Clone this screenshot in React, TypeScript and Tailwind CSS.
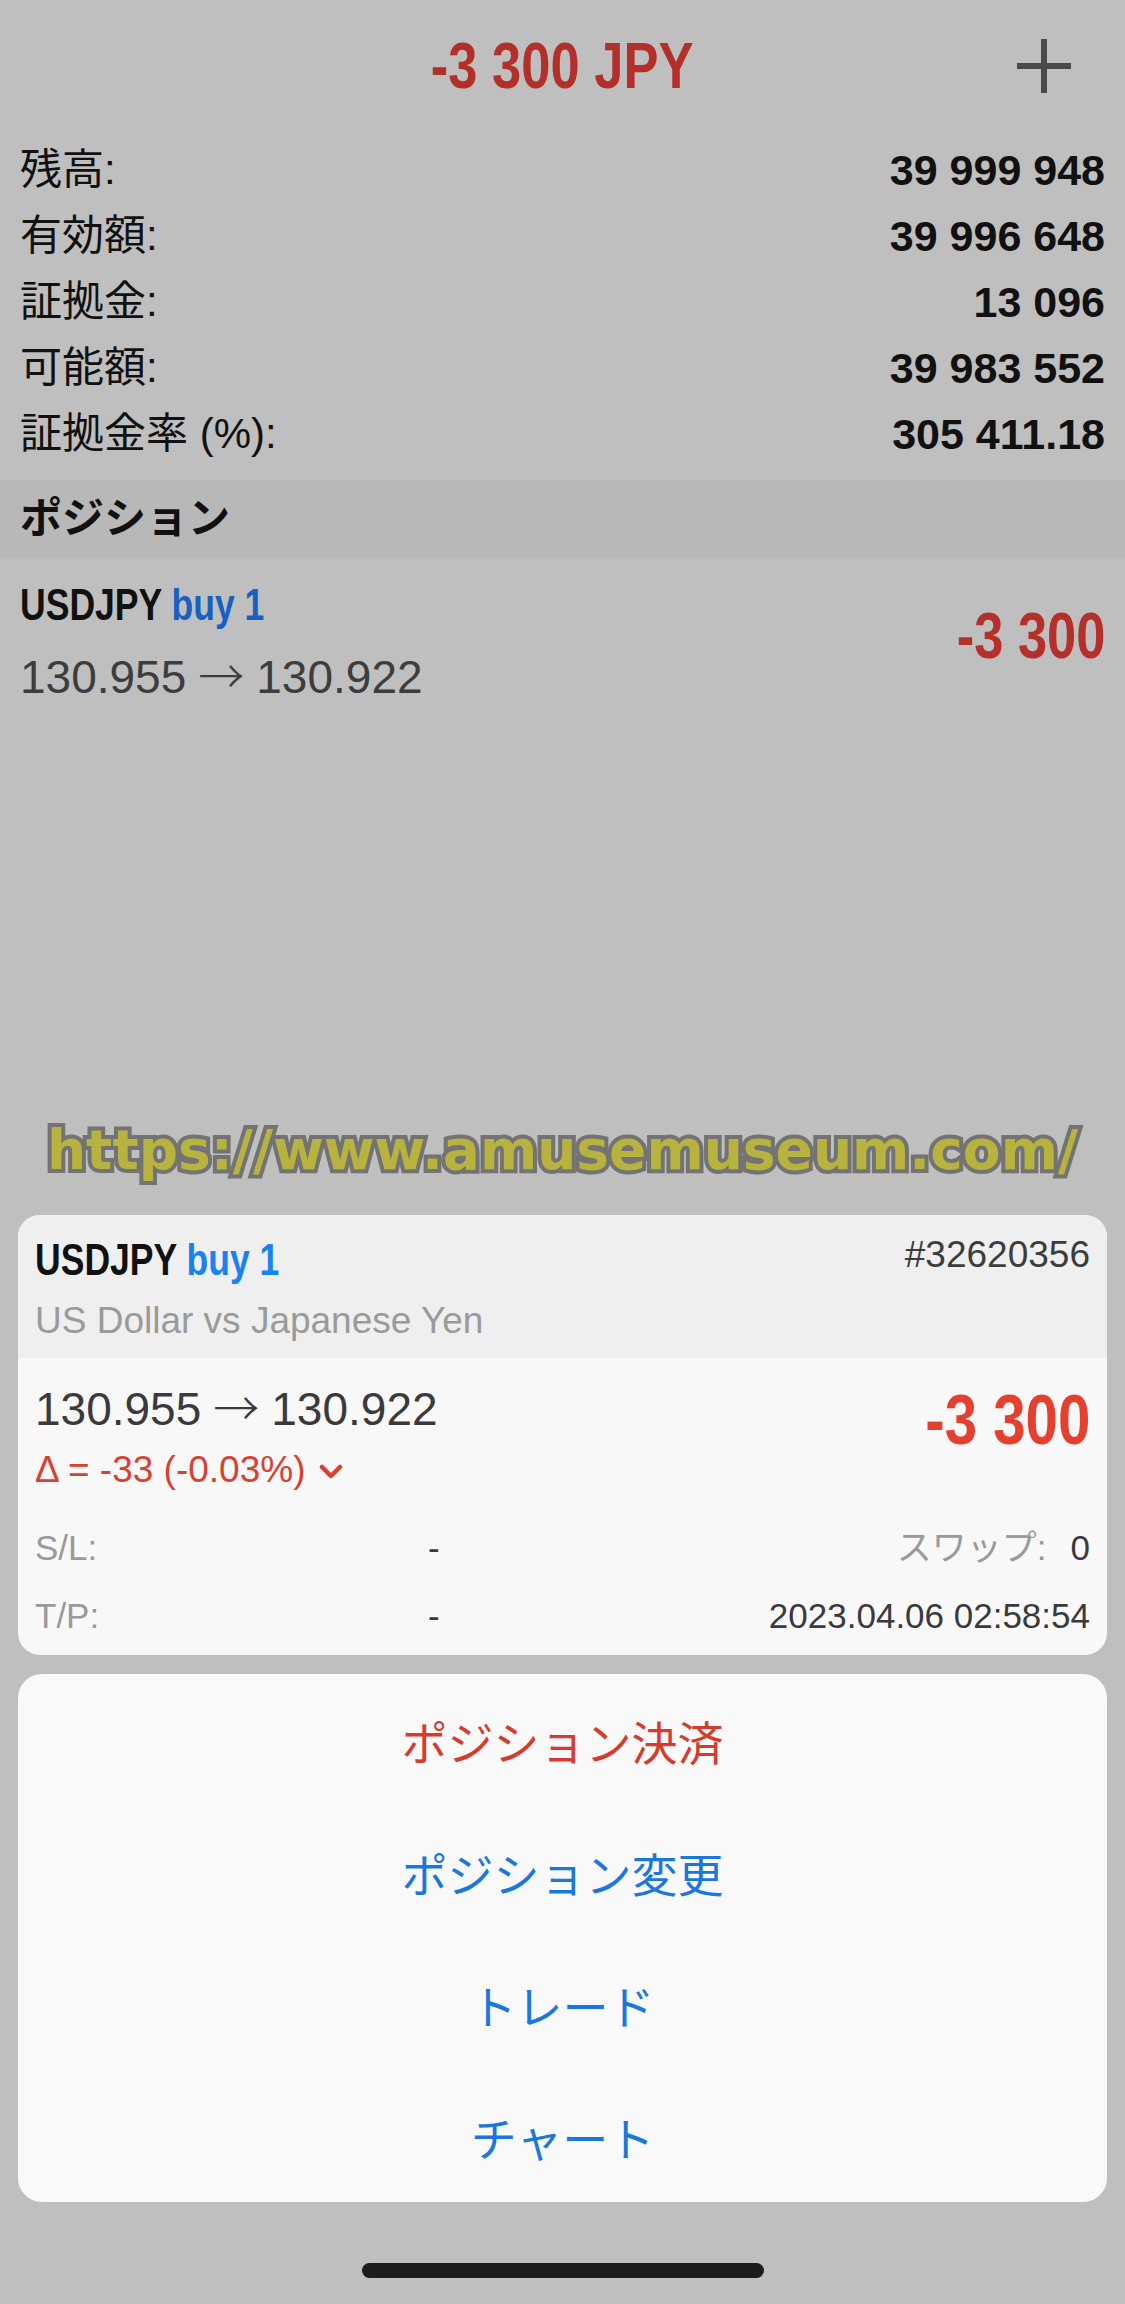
const rows = [
  ["残高:", "39 999 948"],
  ["有効額:", "39 996 648"],
  ["証拠金:", "13 096"],
  ["可能額:", "39 983 552"],
  ["証拠金率 (%):", "305 411.18"],
];

const actions = [
  { label: "ポジション決済", danger: true },
  { label: "ポジション変更", danger: false },
  { label: "トレード", danger: false },
  { label: "チャート", danger: false },
];

const PlusIcon = () => (
  <svg width="54" height="54" viewBox="0 0 54 54">
    <rect x="24" y="0" width="6" height="54" fill="#4a4a4a" />
    <rect x="0" y="24" width="54" height="6" fill="#4a4a4a" />
  </svg>
);

const Chevron = () => (
  <svg width="24" height="16" viewBox="0 0 24 16" className="ml-[14px] mt-[4px]">
    <polyline points="3,3 12,12 21,3" fill="none" stroke="#d9402f" strokeWidth="4.5" strokeLinecap="round" strokeLinejoin="round" />
  </svg>
);

const Arrow = () => (
  <span className="inline-block mx-[12px] font-['Noto_Sans_CJK_JP',sans-serif] font-light">→</span>
);

export default function App() {
  return (
    <div className="w-[1125px] h-[2304px] bg-[#bfbfbf] flex flex-col font-['Liberation_Sans','Noto_Sans_CJK_JP',sans-serif] overflow-hidden">
      {/* Title bar */}
      <div className="h-[132px] grid grid-cols-[1fr_auto_1fr] items-center">
        <div />
        <h1 className="inline-block scale-x-[0.82] origin-center text-[64px] leading-[64px] font-bold text-[#b3302a]">
          -3 300 JPY
        </h1>
        <div className="flex justify-end pr-[54px]">
          <PlusIcon />
        </div>
      </div>

      {/* Account summary */}
      <div className="pt-[5px] px-[20px]">
        {rows.map(([label, value]) => (
          <div key={label} className="h-[66px] flex items-center justify-between">
            <span className="text-[42px] leading-[50px] text-[#111]">{label}</span>
            <span className="text-[43px] leading-[50px] font-bold text-[#111]">{value}</span>
          </div>
        ))}
      </div>

      {/* Positions header */}
      <div className="mt-[13px] h-[78px] bg-[#b8b8b8] flex items-center px-[20px]">
        <span className="text-[42px] leading-[50px] font-bold text-[#111]">ポジション</span>
      </div>

      {/* Position row */}
      <div className="h-[162px] flex justify-between px-[20px]">
        <div className="pt-[22px]">
          <div className="h-[50px] leading-[50px] text-[45px] font-bold whitespace-nowrap inline-block scale-x-[0.79] origin-left">
            <span className="text-[#111]">USDJPY</span>{" "}
            <span className="text-[#1860c0]">buy 1</span>
          </div>
          <div className="mt-[18px] h-[50px] leading-[50px] text-[46px] text-[#3d3d40] whitespace-nowrap">
            130.955<Arrow />130.922
          </div>
        </div>
        <div className="mt-[42px] h-[72px]">
          <span className="inline-block scale-x-[0.82] origin-right leading-[72px] text-[64px] font-bold text-[#b5302a]">
            -3 300
          </span>
        </div>
      </div>

      {/* Watermark */}
      <div className="mt-[390px] h-[80px] flex items-center justify-center">
        <span className="text-[55px] leading-[80px] font-bold font-['DejaVu_Sans',sans-serif] text-[#b8b33e] [-webkit-text-stroke:8px_#737373] [paint-order:stroke_fill]">
          https://www.amusemuseum.com/
        </span>
      </div>

      {/* Position detail card */}
      <div className="mt-[25px] mx-[18px] rounded-[22px] overflow-hidden bg-[#f8f8f8]">
        <div className="h-[143px] bg-[#efefef] px-[17px]">
          <div className="flex justify-between">
            <div className="mt-[20px] h-[50px] leading-[50px] text-[45px] font-bold whitespace-nowrap inline-block scale-x-[0.79] origin-left">
              <span className="text-[#111]">USDJPY</span>{" "}
              <span className="text-[#1a82f0]">buy 1</span>
            </div>
            <div className="mt-[20px] h-[40px] leading-[40px] text-[37px] text-[#3c3c3c]">#32620356</div>
          </div>
          <div className="mt-[16px] h-[40px] leading-[40px] text-[37px] text-[#9a9a9a]">US Dollar vs Japanese Yen</div>
        </div>
        <div className="px-[17px] pb-[5px]">
          <div className="flex justify-between">
            <div className="pt-[22px]">
              <div className="h-[50px] leading-[50px] text-[46px] text-[#3a3a3c] whitespace-nowrap">
                130.955<Arrow />130.922
              </div>
              <div className="mt-[18px] h-[44px] flex items-center text-[37px] text-[#d9402f]">
                <span>Δ = -33 (-0.03%)</span>
                <Chevron />
              </div>
            </div>
            <div className="mt-[22px] h-[80px]">
              <span className="inline-block scale-x-[0.82] origin-right leading-[80px] text-[71px] font-bold text-[#e5402f]">
                -3 300
              </span>
            </div>
          </div>
          <div className="mt-[22px] text-[35px]">
            <div className="h-[68px] flex items-center">
              <span className="w-[393px] text-[#9a9a9a]">S/L:</span>
              <span className="text-[#3a3a3c]">-</span>
              <span className="flex-1 flex justify-end items-center">
                <span className="text-[#9a9a9a]">スワップ:</span>
                <span className="ml-[24px] text-[#3a3a3c]">0</span>
              </span>
            </div>
            <div className="h-[68px] flex items-center">
              <span className="w-[393px] text-[#9a9a9a]">T/P:</span>
              <span className="text-[#3a3a3c]">-</span>
              <span className="flex-1 text-right text-[#3a3a3c]">2023.04.06 02:58:54</span>
            </div>
          </div>
        </div>
      </div>

      {/* Action sheet */}
      <div className="mt-[19px] mx-[18px] rounded-[24px] bg-[#f9f9f9] flex flex-col">
        {actions.map((a) => (
          <button
            key={a.label}
            className={`h-[132px] flex items-center justify-center text-[46px] font-['Noto_Sans_CJK_JP',sans-serif] ${
              a.danger ? "text-[#d63c2e]" : "text-[#1a78dc]"
            }`}>
            {a.label}
          </button>
        ))}
      </div>

      {/* Home indicator */}
      <div className="mt-[61px] mx-auto w-[402px] h-[15px] rounded-full bg-[#1c1c1c]" />
    </div>
  );
}
